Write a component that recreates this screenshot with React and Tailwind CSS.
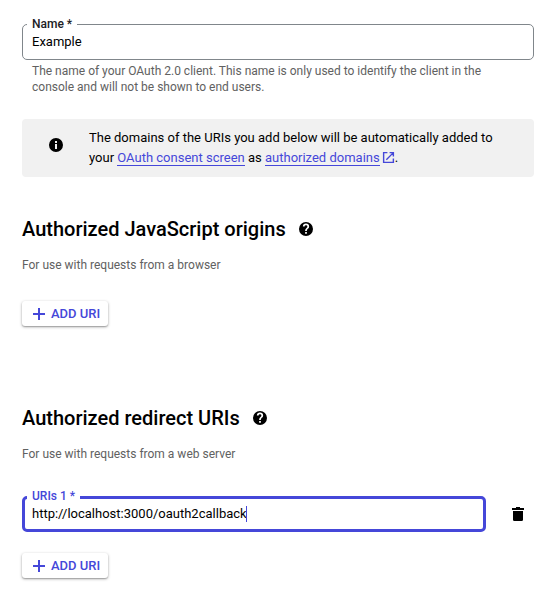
import { useState } from "react";

function Icon({ d, className }) {
  return (
    <svg viewBox="0 0 24 24" fill="currentColor" aria-hidden="true" className={`shrink-0 ${className}`}>
      <path d={d} />
    </svg>
  );
}

const INFO = "M12 1.5a10.5 10.5 0 1 0 0 21 10.5 10.5 0 0 0 0-21zM13.5 18h-3v-7.5h3zm0-9h-3V6h3z";
const HELP =
  "M12 1.5a10.5 10.5 0 1 0 0 21 10.5 10.5 0 0 0 0-21zm1.3 17.5h-2.6v-2.5h2.6zm2.5-8.3-1.1 1.1c-.9.9-1.4 1.6-1.4 3.2h-2.6v-.6c0-1.3.5-2.5 1.4-3.3l1.4-1.4c.4-.4.6-.9.6-1.4a2.1 2.1 0 0 0-4.2 0H7.3a4.7 4.7 0 0 1 9.4 0c0 .9-.3 1.8-.9 2.4z";
const TRASH = "M4.5 7.5h15v13q0 2-2 2h-11q-2 0-2-2zM9 1.5h6V3h6v3H3V3h6z";

function AddButton() {
  return (
    <button
      type="button"
      className="flex h-[25px] w-fit items-center gap-1.5 rounded-[3px] bg-white pr-2 pl-[11px] text-[13px] font-medium text-[#4547d9] shadow-[0_1px_3px_rgba(0,0,0,0.35),0_1px_1px_rgba(0,0,0,0.15)]"
    >
      <svg viewBox="0 0 12 12" className="h-3 w-3 shrink-0" fill="currentColor" aria-hidden="true">
        <path d="M5 0h2v5h5v2H7v5H5V7H0V5h5z" />
      </svg>
      ADD URI
    </button>
  );
}

function SectionHeading({ title, description }) {
  return (
    <>
      <div className="flex items-center gap-3">
        <h2 className="text-[20px] leading-7 font-medium text-black">{title}</h2>
        <button type="button" aria-label={`Help: ${title}`}>
          <Icon d={HELP} className="h-4 w-4" />
        </button>
      </div>
      <p className="mt-3.5 text-xs text-[#616161]">{description}</p>
    </>
  );
}

export default function App() {
  const [name, setName] = useState("Example");
  const [uri, setUri] = useState("http://localhost:3000/oauth2callback");

  return (
    <form className="bg-white pt-6 pr-[5px] pb-3 pl-[22px] font-['Roboto',sans-serif] text-[13px] text-black">
      <div className="relative flex h-9 rounded-[5px] border border-[#80868b]">
        <label htmlFor="name" className="absolute -top-[9px] left-1 bg-white px-[5px] text-xs font-medium text-[#202124]">
          Name *
        </label>
        <input
          id="name"
          value={name}
          onChange={(e) => setName(e.target.value)}
          className="w-full bg-transparent px-[9px] outline-none"
        />
      </div>
      <p className="mt-[3px] px-2.5 pr-10 text-xs text-[#616161]">
        The name of your OAuth 2.0 client. This name is only used to identify the client in the console and will not be
        shown to end users.
      </p>

      <div className="mt-6 flex rounded-[4px] bg-[#f1f1f1] py-[9px] pr-8 pl-[26px]">
        <Icon d={INFO} className="mt-[9px] mr-[25px] h-4 w-4" />
        <p className="leading-5">
          The domains of the URIs you add below will be automatically added to your{" "}
          <a href="#consent" className="border-b border-[#4547d9] text-[#4547d9]">
            OAuth consent screen
          </a>{" "}
          as{" "}
          <a href="#domains" className="text-[#4547d9]">
            <span className="border-b border-[#4547d9]">authorized domains</span>
            <svg
              viewBox="0 0 12 12"
              fill="none"
              stroke="currentColor"
              strokeWidth="1.3"
              aria-hidden="true"
              className="ml-0.5 inline h-[13px] w-[13px] align-[-2px]"
            >
              <path d="M5 1.5H1.5v9h9V7M7 1.5h3.5V5M10.5 1.5 4 8" />
            </svg>
          </a>
          .
        </p>
      </div>

      <section className="mt-[38px]">
        <SectionHeading title="Authorized JavaScript origins" description="For use with requests from a browser" />
        <div className="mt-7">
          <AddButton />
        </div>
      </section>

      <section className="mt-[78px]">
        <SectionHeading title="Authorized redirect URIs" description="For use with requests from a web server" />
        <div className="mt-[34px] mb-[21px] flex items-center">
          <div className="relative flex h-9 flex-1 items-center rounded-[5px] border-3 border-[#4547d9]">
            <label htmlFor="uri" className="absolute -top-[11px] left-0.5 bg-white px-[5px] text-xs font-medium text-[#4547d9]">
              URIs 1 *
            </label>
            <input
              id="uri"
              value={uri}
              onChange={(e) => setUri(e.target.value)}
              className="-mr-px field-sizing-content bg-transparent pl-[7px] caret-transparent outline-none"
            />
            <span aria-hidden="true" className="h-4 w-px bg-[#4547d9]" />
          </div>
          <button type="button" aria-label="Delete URI" className="mr-2 ml-6">
            <Icon d={TRASH} className="h-4 w-4" />
          </button>
        </div>
        <AddButton />
      </section>
    </form>
  );
}
